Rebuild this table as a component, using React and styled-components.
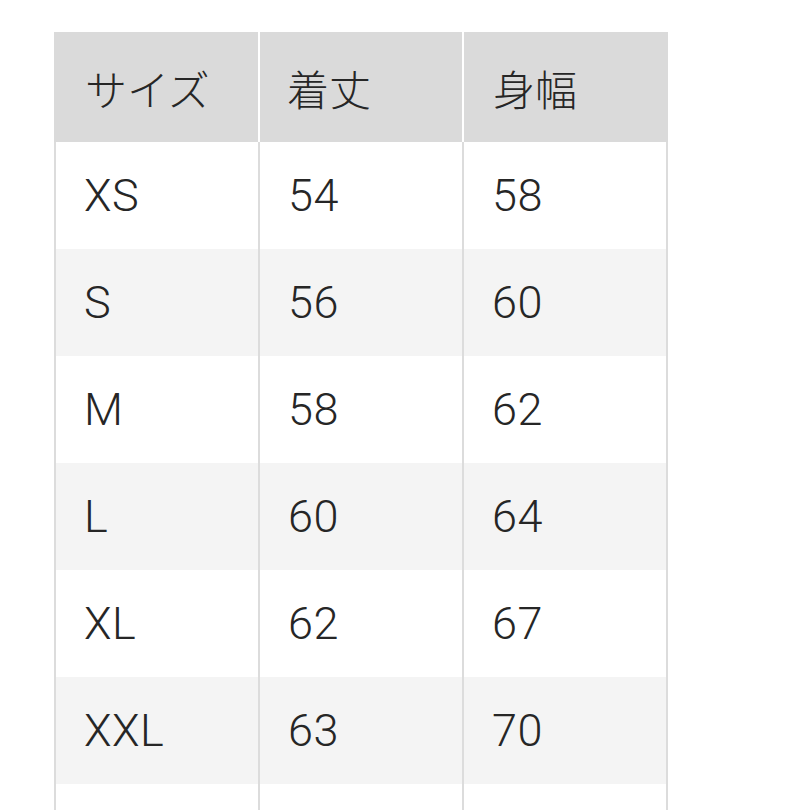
import React from "react";
import styled, { createGlobalStyle } from "styled-components";

const Global = createGlobalStyle`
  html, body { margin: 0; padding: 0; background: #ffffff; }
  body { font-family: Roboto, "Noto Sans CJK JP", sans-serif; }
`;

const Page = styled.div`
  padding: 32px 0 0 54px;
`;

const Table = styled.div`
  width: 614px;
  display: flex;
  flex-direction: column;
`;

const HeaderRow = styled.div`
  display: grid;
  grid-template-columns: 204px 202px 204px;
  column-gap: 2px;
  background: #ffffff;
`;

const HeaderCell = styled.div`
  height: 110px;
  background: #dadada;
  display: flex;
  align-items: center;
  padding-left: ${(p) => p.$pad}px;
  font-family: "Noto Sans CJK JP", sans-serif;
  font-weight: 300;
  font-size: 42px;
  color: #262626;
`;

const BodyRow = styled.div`
  display: grid;
  grid-template-columns: 202px 202px 202px;
  column-gap: 2px;
  padding: 0 2px;
  background: #dcdcdc;
`;

const BodyCell = styled.div`
  height: 107px;
  background: ${(p) => (p.$striped ? "#f4f4f4" : "#ffffff")};
  display: flex;
  align-items: center;
  padding-left: 28px;
  font-family: Roboto, "Noto Sans CJK JP", sans-serif;
  font-weight: 300;
  font-size: 45px;
  color: #262626;
  letter-spacing: 0.5px;
`;

const headers = [
  { label: "サイズ", pad: 31 },
  { label: "着丈", pad: 27 },
  { label: "身幅", pad: 29 },
];

const rows = [
  ["XS", "54", "58"],
  ["S", "56", "60"],
  ["M", "58", "62"],
  ["L", "60", "64"],
  ["XL", "62", "67"],
  ["XXL", "63", "70"],
  ["", "", ""],
];

export default function App() {
  return (
    <>
      <Global />
      <Page>
        <Table>
          <HeaderRow>
            {headers.map((h) => (
              <HeaderCell key={h.label} $pad={h.pad}>
                {h.label}
              </HeaderCell>
            ))}
          </HeaderRow>
          {rows.map((r, i) => (
            <BodyRow key={i}>
              {r.map((c, j) => (
                <BodyCell key={j} $striped={i % 2 === 1}>
                  {c}
                </BodyCell>
              ))}
            </BodyRow>
          ))}
        </Table>
      </Page>
    </>
  );
}
